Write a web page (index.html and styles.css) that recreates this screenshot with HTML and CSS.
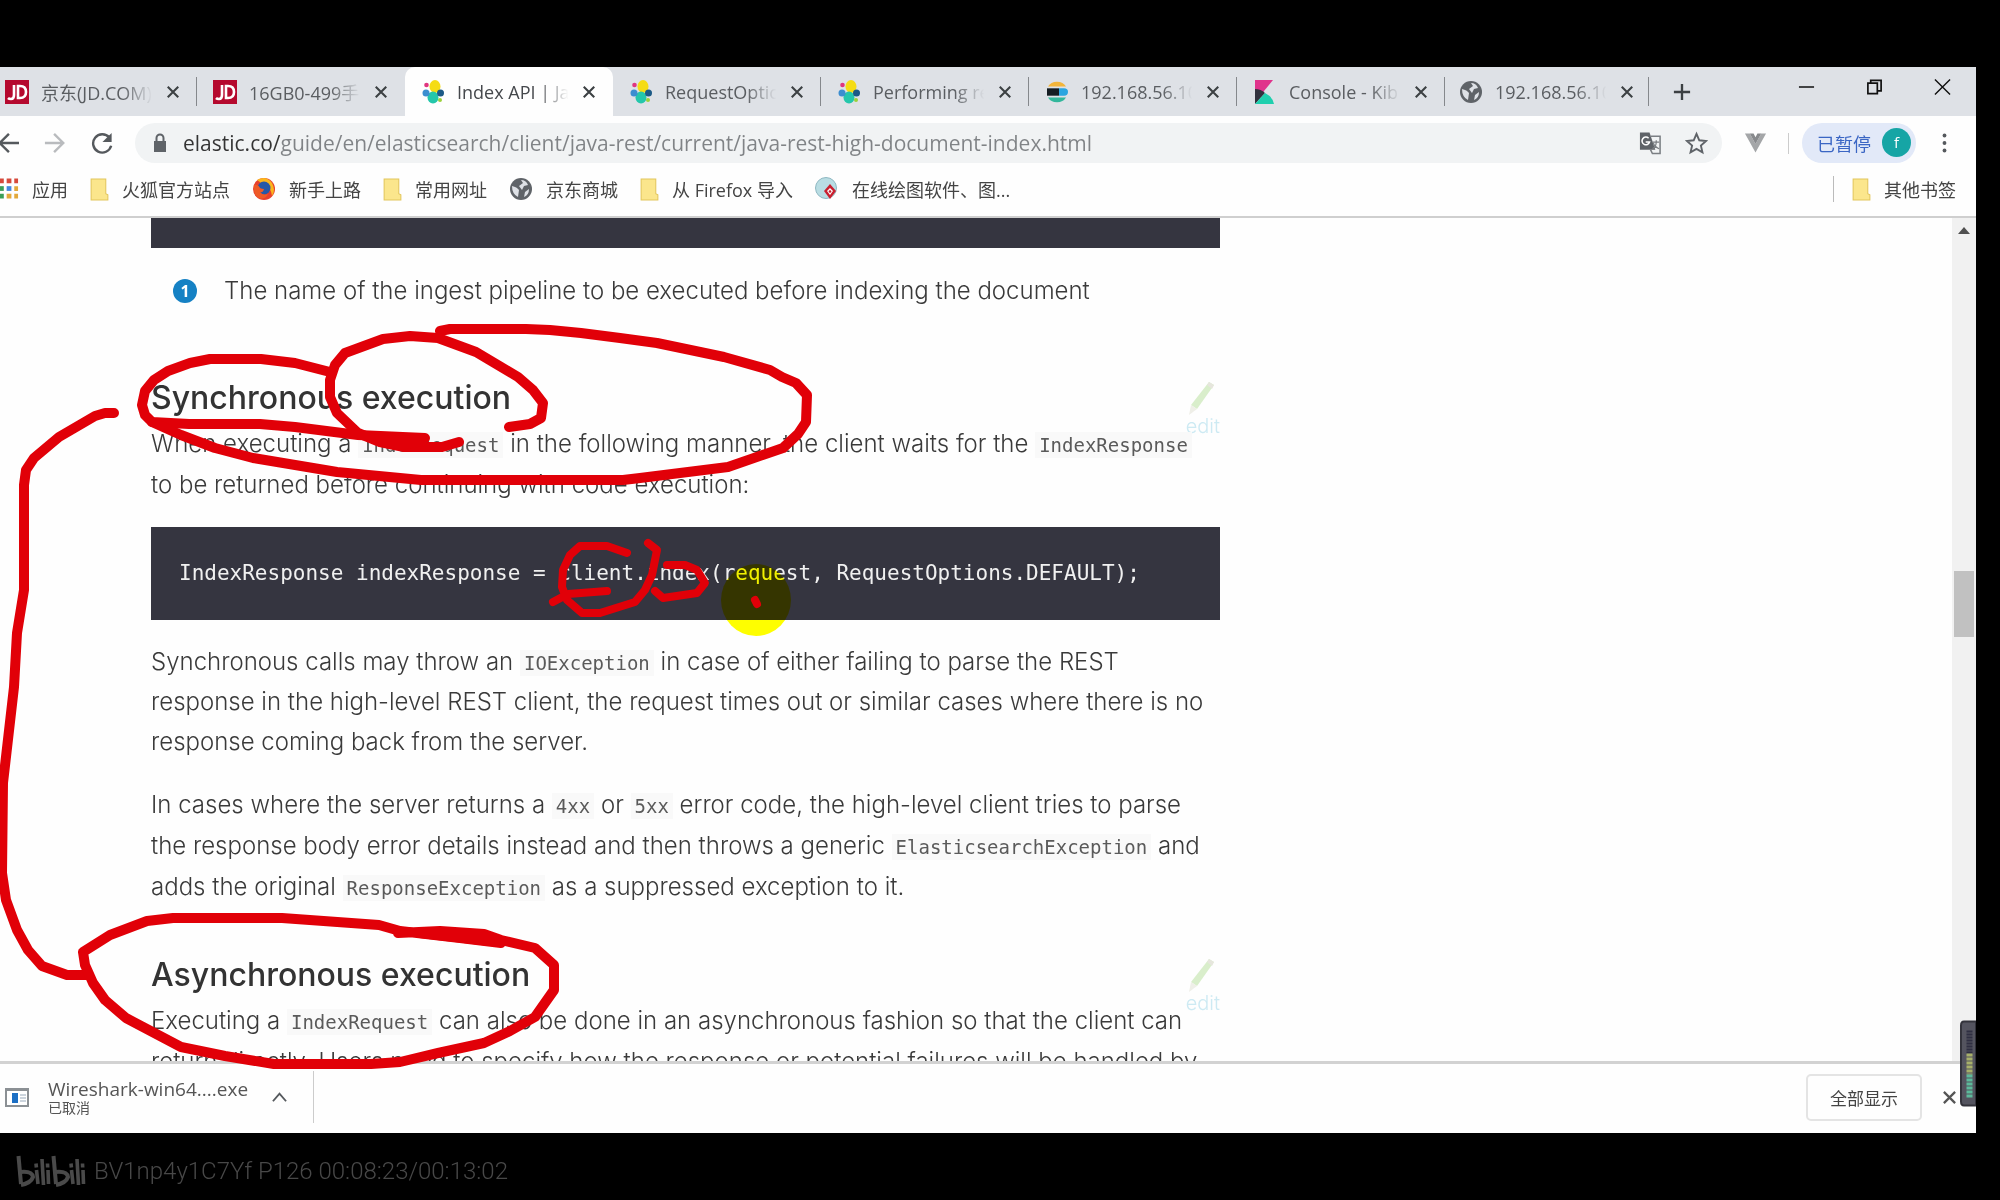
FILE: index.html
```html
<!DOCTYPE html>
<html lang="zh">
<head>
<meta charset="utf-8">
<title>Index API | Java REST Client</title>
<link rel="stylesheet" href="styles.css">
</head>
<body>
<svg width="0" height="0" class="defs" aria-hidden="true">
<defs>
<symbol id="x" viewBox="0 0 16 16"><path d="M2 2 14 14M14 2 2 14" stroke="currentColor" stroke-width="2.4" fill="none"/></symbol>
<symbol id="jd" viewBox="0 0 24 24"><path fill="#b5092e" d="M0 0h24v24H0z"/><path d="M9 5v10q0 4-3 4-2 0-3-1M13 6v12h2q6 0 6-6t-6-6z" fill="none" stroke="#fff" stroke-width="2.6"/></symbol>
<symbol id="cluster" viewBox="0 0 24 24"><ellipse cx="14" cy="6.5" rx="5.5" ry="6.500" fill="#f5dc14"/><ellipse cx="12" cy="17.500" rx="5.500" ry="6" fill="#24c7ab"/><ellipse cx="5" cy="13" rx="3.500" ry="3.500" fill="#3c8ed0"/><ellipse cx="19.500" cy="13" rx="3.500" ry="3.500" fill="#1c5a86"/><circle cx="5.500" cy="5" r="2.300" fill="#e0357f"/><circle cx="19" cy="20" r="2" fill="#9bd13c"/></symbol>
<symbol id="elastic" viewBox="0 0 24 26" preserveAspectRatio="none"><path d="M3 7a10 9 0 0 1 18 0z" fill="#f3b53a"/><path d="M2 9h12v8H2z" fill="#151c22"/><path d="M14 9h5a4 4 0 0 1 0 8h-5z" fill="#2aa5e0"/><path d="M3 19h18a10 9 0 0 1-18 0z" fill="#33b79c"/></symbol>
<symbol id="kibana" viewBox="0 0 24 24"><path d="M2 0h18L2 22z" fill="#e0338c"/><path d="M2 9q6 0 10 4L2 24z" fill="#32323e"/><path d="M12 13q8 4 9 11H2z" fill="#1fcfae"/></symbol>
<symbol id="globe" viewBox="0 0 24 24"><circle cx="12" cy="12" r="11" fill="#5f6368"/><path d="M3 9q5 1 7 4l-1 7q-6-3-6-11zM12 3q5 0 7 5l-4 1-2 4-3-4 4-3zM20 12q0 6-5 8l1-5z" fill="#dee1e6"/></symbol>
<symbol id="folder" viewBox="0 0 18 22"><path d="M1 1h14v14l2 1v5H1z" fill="#fbe68c" stroke="#e2c65c"/></symbol>
<symbol id="pencil" viewBox="0 0 30 36"><path d="M23 2l5 3L11 29l-6-4z" fill="#d9eecb"/><path d="M23 2l5 3-2 4-5-4z" fill="#e6e6dd"/><path d="M5 25l6 4-8 6z" fill="#efefe8"/></symbol>
</defs>
</svg>
<main class="player">
<div class="screen">
<header class="tabs">
<div class="tab"><svg class="ico"><use href="#jd"/></svg><span class="name">京东(JD.COM)</span><button class="close" aria-label="关闭"><svg><use href="#x"/></svg></button></div>
<div class="tab before-active"><svg class="ico"><use href="#jd"/></svg><span class="name">16GB0-499手</span><button class="close" aria-label="关闭"><svg><use href="#x"/></svg></button></div>
<div class="tab active"><svg class="ico"><use href="#cluster"/></svg><span class="name">Index API | Ja</span><button class="close" aria-label="关闭"><svg><use href="#x"/></svg></button></div>
<div class="tab"><svg class="ico"><use href="#cluster"/></svg><span class="name">RequestOptic</span><button class="close" aria-label="关闭"><svg><use href="#x"/></svg></button></div>
<div class="tab"><svg class="ico"><use href="#cluster"/></svg><span class="name">Performing re</span><button class="close" aria-label="关闭"><svg><use href="#x"/></svg></button></div>
<div class="tab"><svg class="ico"><use href="#elastic"/></svg><span class="name">192.168.56.10</span><button class="close" aria-label="关闭"><svg><use href="#x"/></svg></button></div>
<div class="tab"><svg class="ico"><use href="#kibana"/></svg><span class="name">Console - Kib</span><button class="close" aria-label="关闭"><svg><use href="#x"/></svg></button></div>
<div class="tab"><svg class="ico"><use href="#globe"/></svg><span class="name">192.168.56.10</span><button class="close" aria-label="关闭"><svg><use href="#x"/></svg></button></div>
<button class="new" aria-label="新标签页"><svg viewBox="0 0 20 20"><path d="M10 1v18M1 10h18" stroke="#3c4043" stroke-width="2.6"/></svg></button>
<div class="win">
<button aria-label="最小化"><svg viewBox="0 0 18 18"><path d="M1 9h16" stroke="#111" stroke-width="1.6"/></svg></button>
<button aria-label="还原"><svg viewBox="0 0 18 18"><path d="M2 5h10v11H2zM5 5V2h11v11h-4" fill="none" stroke="#111" stroke-width="1.8"/></svg></button>
<button aria-label="关闭窗口"><svg viewBox="0 0 18 18"><path d="M1 1l16 16M17 1 1 17" stroke="#111" stroke-width="1.5"/></svg></button>
</div>
</header>
<div class="toolbar">
<button class="nav" aria-label="后退"><svg viewBox="0 0 24 24"><path d="M24 12H4M13 2 3 12l10 10" fill="none" stroke="#55595d" stroke-width="2.6"/></svg></button>
<button class="nav" aria-label="前进"><svg viewBox="0 0 24 24"><path d="M1 12h20M11 2l10 10-10 10" fill="none" stroke="#b9bbbe" stroke-width="2.6"/></svg></button>
<button class="nav" aria-label="刷新"><svg viewBox="0 0 24 24"><path d="M20 6a10 10 0 1 0 2 9" fill="none" stroke="#55595d" stroke-width="2.6"/><path d="M22.5 1v10h-10z" fill="#55595d"/></svg></button>
<div class="omnibox">
<svg class="lock" viewBox="0 0 14 20"><path d="M1 8h12v11H1z" fill="#5f6368"/><path d="M3.5 8V5a3.5 3.5 0 0 1 7 0v3" fill="none" stroke="#5f6368" stroke-width="2"/></svg>
<input class="url" aria-label="地址" value="elastic.co/guide/en/elasticsearch/client/java-rest/current/java-rest-high-document-index.html">
<button aria-label="翻译"><svg viewBox="0 0 24 24"><path d="M1 1h10l6 18H1z" fill="#5f6368"/><path d="M12 5h10v18h-8l-2-4" fill="none" stroke="#7b7f83" stroke-width="1.6"/><path d="M10 7a4 4 0 1 0 1 4H7" fill="none" stroke="#fff" stroke-width="1.6"/><path d="M14 11h7M18 9v2q0 5-4 7M15 12q1 4 6 6" fill="none" stroke="#7b7f83" stroke-width="1.3"/></svg></button>
<button aria-label="收藏"><svg viewBox="0 0 24 24"><path d="M12 2.5l2.9 6.7 7.1.7-5.4 4.8 1.6 7.1-6.200-3.700-6.200 3.700 1.600-7.100L2 9.900l7.100-.7z" fill="none" stroke="#5f6368" stroke-width="2"/></svg></button>
</div>
<button class="vue" aria-label="Vue"><svg viewBox="0 0 24 24"><path d="M1 2h5l6 11 6-11h5L12 22z" fill="#a4a6a8"/><path d="M6 2h4l2 4 2-4h4l-6 11z" fill="#87898c"/></svg></button>
<button class="profile">已暂停<span class="avatar">f</span></button>
<button class="dots" aria-label="菜单"><svg viewBox="0 0 6 24"><circle cx="3" cy="3" r="2.3"/><circle cx="3" cy="12" r="2.3"/><circle cx="3" cy="21" r="2.3"/></svg></button>
</div>
<nav class="bookmarks">
<a href="#"><svg class="apps" viewBox="0 0 20 24"><path d="M0 1h4v5H0zM7 1h5v5H7zM15 1h4v5h-4z" fill="#d64a3c"/><path d="M0 9h4v5H0z" fill="#3b9e58"/><path d="M7 9h5v5H7z" fill="#4387e0"/><path d="M15 9h4v5h-4zM7 17h5v5H7zM15 17h4v5h-4z" fill="#e2a93b"/><path d="M0 17h4v5H0z" fill="#3b9e58"/></svg>应用</a>
<a href="#"><svg class="folder"><use href="#folder"/></svg>火狐官方站点</a>
<a href="#"><svg viewBox="0 0 24 24"><circle cx="12" cy="12" r="11" fill="#e7402c"/><path d="M5 3q9-5 15 3 4 7 0 13-1-9-8-11z" fill="#fbb51c"/><circle cx="12" cy="11" r="6.5" fill="#2458a8"/><path d="M2 8q4-1 6 3 2 1 4 1-1 4-4 3 3 4 8 2-3 6-9 4-6-3-5-13z" fill="#ee5a26"/></svg>新手上路</a>
<a href="#"><svg class="folder"><use href="#folder"/></svg>常用网址</a>
<a href="#"><svg><use href="#globe"/></svg>京东商城</a>
<a href="#"><svg class="folder"><use href="#folder"/></svg>从 Firefox 导入</a>
<a href="#"><svg viewBox="0 0 24 24"><circle cx="11" cy="11" r="10.5" fill="#b9dde3" stroke="#8fb8c2"/><path d="M15 7l6 7-6 8-6-8z" fill="#c9202f"/><path d="M15 11l3 3-3 4-3-4z" fill="#fff"/><circle cx="15" cy="14.5" r="1.3" fill="#c9202f"/></svg>在线绘图软件、图...</a>
<a href="#" class="other"><svg class="folder"><use href="#folder"/></svg>其他书签</a>
</nav>
<div class="view">
<article class="doc">
<div class="prevcode"></div>
<ol class="callout"><li><span class="num">1</span>The name of the ingest pipeline to be executed before indexing the document</li></ol>
<div class="head"><h2>Synchronous execution</h2><a class="edit" href="#"><svg><use href="#pencil"/></svg>edit</a></div>
<p>When executing a <code>IndexRequest</code> in the following manner, the client waits for the <code>IndexResponse</code><br>to be returned before continuing with code execution:</p>
<pre>IndexResponse indexResponse = client.index(request, RequestOptions.DEFAULT);</pre>
<p class="tight">Synchronous calls may throw an <code>IOException</code> in case of either failing to parse the REST<br>response in the high-level REST client, the request times out or similar cases where there is no<br>response coming back from the server.</p>
<p>In cases where the server returns a <code>4xx</code> or <code>5xx</code> error code, the high-level client tries to parse<br>the response body error details instead and then throws a generic <code>ElasticsearchException</code> and<br>adds the original <code>ResponseException</code> as a suppressed exception to it.</p>
<div class="head"><h2>Asynchronous execution</h2><a class="edit" href="#"><svg><use href="#pencil"/></svg>edit</a></div>
<p>Executing a <code>IndexRequest</code> can also be done in an asynchronous fashion so that the client can<br>return directly. Users need to specify how the response or potential failures will be handled by</p>
</article>
<div class="scrollbar"><span class="up"></span><span class="thumb"></span></div>
</div>
<footer class="downloads">
<div class="item"><svg class="exe" viewBox="0 0 24 20"><path d="M1 2h22v17H1z" fill="#fff" stroke="#8b9094" stroke-width="2"/><path d="M1 1h22v3H1z" fill="#8b9094"/><path d="M7 6h6v10H7z" fill="#1c6fc4"/><path d="M15 8h6M15 11h6M15 14h6" stroke="#9ab"/></svg>
<div class="file"><span>Wireshark-win64....exe</span><small>已取消</small></div>
<button aria-label="更多"><svg viewBox="0 0 16 16"><path d="M1 12 8 4l7 8" fill="none" stroke="#55595d" stroke-width="2"/></svg></button></div>
<button class="all">全部显示</button>
<button class="shut" aria-label="关闭下载栏"><svg><use href="#x"/></svg></button>
</footer>
<span class="spot"></span>
<svg class="ink" viewBox="0 67 1976 1066" aria-hidden="true">
<g fill="none" stroke="#e10008" stroke-width="10" stroke-linecap="round" stroke-linejoin="round">
<path d="M330 372 295 363 261 359H210L190 363 168 371 154 380 145 391 142 405 145 415 152 422 189 424H260L295 427 358 435 425 438"/>
<path d="M152 422 181 435 215 448 253 458 337 472 421 480H623L640 478 728 467 783 448 798 434 806 422 807 395 796 383 782 377 770 370 724 357 657 343 620 338 581 333 550 330 526 329H450L440 331"/>
<path d="M509 427 530 424 541 418 543 403 533 390 518 377 476 352 438 338 410 336 383 339 345 353 335 365 330 380V397L337 413 358 433 380 442 404 447H442L459 442"/>
<path d="M380 440 423 441 400 445z"/>
<path d="M114 413 105 413 95 416 59 437 34 458 26 470 24 485V590L17 633 14 687 3 783 2 873 6 900 17 930 28 950 42 966 67 975H88"/>
<path d="M398 933 440 931 484 934 501 940 535 948 554 965V990L535 1017 510 1031 484 1043 438 1053 400 1062 371 1064H274L225 1056 181 1047 126 1018 105 1000 93 983 85 965 83 952 110 935 147 921 173 918H282L379 925 400 931 460 938 501 943"/>
<path d="M420 933 480 935 490 941z"/>
</g>
<g fill="none" stroke="#e10008" stroke-width="8" stroke-linecap="round" stroke-linejoin="round">
<path d="M627 553 607 546H580L570 555 563 570 562 587 567 600 582 613H600L635 602 645 590 652 575 657 550 648 543"/>
<path d="M553 602 568 594 607 591M655 591 663 598 697 593 705 583 697 570 685 565H667"/>
<path d="M755 600 757 604"/>
</g>
</svg>
<svg class="meter" viewBox="0 0 16 86" aria-hidden="true"><path d="M16 1H4Q1 1 1 5V81Q1 85 4 85H16z" fill="#54545f" stroke="#33333b" stroke-width="2"/><path d="M9.5 10V33" stroke="#2f2f42" stroke-width="6" stroke-dasharray="2 1"/><path d="M9.5 33V54" stroke="#a7b06a" stroke-width="6" stroke-dasharray="3 1"/><path d="M9.5 54V77" stroke="#5cba9b" stroke-width="6" stroke-dasharray="3 1"/></svg>
</div>
<div class="caption">
<svg class="bili" viewBox="0 0 70 34" role="img" aria-label="bilibili" fill="none" stroke="#4a4a4a">
<g stroke-width="4"><path d="M2.5 2 5 30"/><path d="M5 18q11-1 12 5-2 6-12 8"/><path d="M37.5 2 40 30"/><path d="M40 18q11-1 12 5-2 6-12 8"/></g>
<g stroke-width="3.6"><path d="M20.5 16 22 30M26 5l1.5 26M32 16l.5 14M55.5 16 57 30M61 5l1.5 26M67 16l.5 14"/></g>
<g stroke-width="3.6"><path d="M20 9.5l.4 4M31.5 9.5l.2 4M55 9.5l.4 4M66.5 9.5l.2 4"/></g>
</svg>
<span>BV1np4y1C7Yf P126 00:08:23/00:13:02</span>
</div>
</main>
</body>
</html>
```
FILE: styles.css
```css
*{box-sizing:border-box}
body{margin:0;background:#000;color:#555}
button{border:0;padding:0;background:none;display:flex;align-items:center;justify-content:center;font:inherit;color:inherit}
svg{display:block;flex:none}
a{color:inherit;text-decoration:none}
.defs{position:absolute}
.player{height:100vh;padding-top:67px;display:flex;flex-direction:column}
.screen{flex:1;min-height:0;margin-right:24px;position:relative;overflow:hidden;background:#fefefe;display:flex;flex-direction:column;font-family:"Open Sans","Noto Sans CJK SC",sans-serif}

.tabs{height:49px;flex:none;display:flex;background:#dee1e6}
.tab{flex:0 0 208px;display:flex;align-items:center;padding-left:16px;position:relative;font-size:18px;color:#5a5d61}
.tab:first-child{flex-basis:197px;padding-left:5px}
.tab:nth-child(8){flex-basis:204px;padding-left:14px}
.tab .ico{width:24px;height:24px;margin-right:12px}
.tab .name{width:116px;overflow:hidden;white-space:nowrap;-webkit-mask-image:linear-gradient(90deg,#000 70%,transparent 96%);mask-image:linear-gradient(90deg,#000 70%,transparent 96%)}
.tab .close{width:16px;height:16px;margin-left:8px;color:#3c4043}
.close svg{width:14px;height:14px}
.tab::after{content:"";position:absolute;right:0;top:10px;height:29px;width:1px;background:#85888c}
.active::after,.before-active::after{display:none}
.active{background:#fefefe;border-radius:10px 10px 0 0;color:#45484c}
.new{width:66px}
.new svg{width:18px;height:20px}
.win{margin-left:auto;display:flex;padding-bottom:9px}
.win button{width:68px}
.win svg{width:17px;height:18px}

.toolbar{height:53px;flex:none;display:flex;align-items:center;padding-right:24px}
.nav{width:44px;margin-right:3px}
.nav:first-child{width:30px;padding-right:14px}
.nav svg{width:22px;height:22px}
.omnibox{flex:1;height:40px;margin-left:8px;border-radius:20px;background:#f1f3f4;display:flex;align-items:center;padding:0 14px 0 18px;gap:23px}
.lock{width:14px;height:20px}
.url{flex:1;min-width:0;border:0;padding:0;margin-left:-7px;height:36px;font:21px "Open Sans",sans-serif;color:transparent;background:linear-gradient(90deg,#333 0,#333 97px,#808386 97px);-webkit-background-clip:text;background-clip:text}
.omnibox button svg{width:23px;height:24px}
.vue{width:66px}
.vue svg{width:23px;height:24px}
.profile{height:40px;margin-left:14px;padding:0 5px 0 15px;border-radius:20px;background:#e2e9f8;color:#3b66c4;font-size:18px;gap:11px;position:relative}
.profile::before{content:"";position:absolute;left:-14px;top:10px;width:1px;height:21px;background:#ccc}
.avatar{width:29px;height:29px;border-radius:50%;background:#16a5a5;color:#fff;font-size:15px;line-height:28px}
.dots{width:16px;margin-left:20px}
.dots svg{width:5px;height:20px;fill:#55595d}

.bookmarks{height:49px;flex:none;display:flex;align-items:center;gap:22px;padding:0 20px 7px 0;border-bottom:2px solid #cfcfcf;font-size:18px;color:#444}
.bookmarks a{display:flex;align-items:center;gap:13px;white-space:nowrap}
.bookmarks svg{width:24px;height:24px}
.bookmarks .folder{width:19px;height:23px}
.bookmarks .apps{width:19px}
.other{margin-left:auto;padding-left:18px;border-left:1px solid #bbb}

.view{flex:1;min-height:0;display:flex;justify-content:space-between;overflow:hidden}
.doc{width:1069px;margin-left:151px;font:300 24px/41px Inter,sans-serif;color:#3a3a3a;white-space:nowrap}
.prevcode{height:30px;background:#353540}
.callout{list-style:none;margin:0 0 63px;padding:22px 0 0 22px}
.callout li{display:flex;align-items:center}
.num{width:24px;height:24px;margin-right:27px;border-radius:50%;background:#1581c4;color:#fff;font:700 16px/24px "Open Sans",sans-serif;text-align:center}
.head{display:flex;justify-content:space-between;margin-top:44px;height:49px}
.head h2{margin:0;font-size:32px;line-height:48px;font-weight:500;color:#333}
.edit{margin-top:6px;font-size:20px;line-height:20px;color:#cdeaf3}
.edit svg{width:30px;height:36px}
.doc p{margin:0 0 22px}
.doc .tight{line-height:40px}
code{font:19px/24px "DejaVu Sans Mono",monospace;padding:2px 4px;background:#f9f9f9;color:#5a5a5a}
pre{margin:0 0 22px;padding:26px 28px;background:#353540;color:#f0f0f0;font:21px/41px "DejaVu Sans Mono",monospace}

.scrollbar{width:24px;background:#f1f1f1;display:flex;flex-direction:column;align-items:center}
.up{margin-top:9px;border:6px solid transparent;border-top:0;border-bottom:7px solid #505050}
.thumb{width:20px;height:66px;margin-top:337px;background:#c1c1c1}

.downloads{height:72px;flex:none;border-top:3px solid #d2d2d2;display:flex;align-items:center;padding:0 18px 3px 0}
.item{display:flex;align-items:center;height:52px;width:314px;padding-left:5px;border-right:1px solid #ccc}
.exe{width:24px;height:20px;margin-right:19px}
.file{width:224px;font-size:19px;line-height:22px;display:flex;flex-direction:column}
.file small{font-size:14px;line-height:16px}
.item button svg{width:15px;height:15px}
.all{margin-left:auto;width:116px;height:47px;border:2px solid #e4e4e4;border-radius:5px;font-size:17px;color:#444}
.shut{width:18px;margin-left:18px}
.shut svg{width:15px;height:15px}

.spot{position:absolute;left:721px;top:497px;width:70px;height:72px;border-radius:50%;background:#ff0;mix-blend-mode:multiply}
.ink{position:absolute;left:0;top:0;width:1976px;height:1066px;pointer-events:none}
.meter{position:absolute;right:0;bottom:26px;width:16px;height:87px}

.caption{height:67px;flex:none;display:flex;align-items:center;gap:8px;padding:8px 0 0 16px;color:#484848;font:300 24px Roboto,sans-serif}
.bili{width:70px;height:34px}
```
